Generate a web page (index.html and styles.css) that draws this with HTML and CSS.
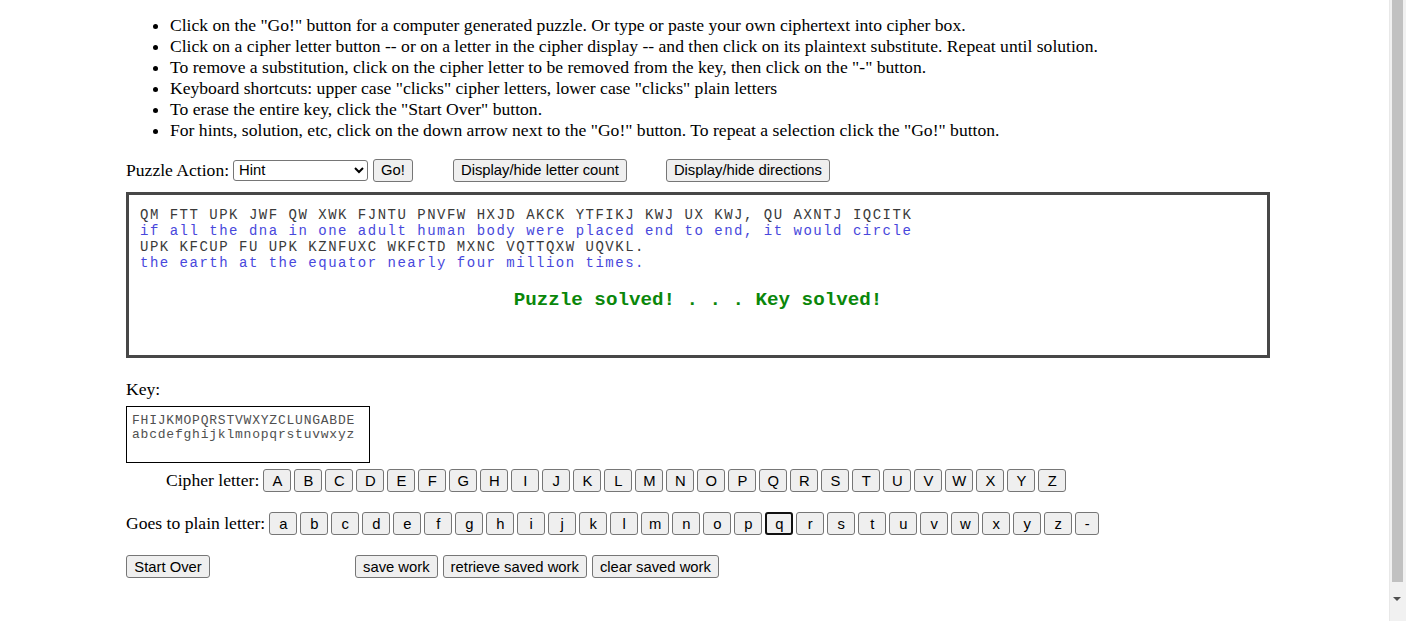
FILE: index.html
```html
<!DOCTYPE html>
<html>
<head>
<meta charset="utf-8">
<title>Cryptogram</title>
<link rel="stylesheet" href="styles.css">
</head>
<body>
<div class="page">
  <ul class="directions">
    <li>Click on the "Go!" button for a computer generated puzzle. Or type or paste your own ciphertext into cipher box.</li>
    <li>Click on a cipher letter button -- or on a letter in the cipher display -- and then click on its plaintext substitute. Repeat until solution.</li>
    <li>To remove a substitution, click on the cipher letter to be removed from the key, then click on the "-" button.</li>
    <li>Keyboard shortcuts: upper case "clicks" cipher letters, lower case "clicks" plain letters</li>
    <li>To erase the entire key, click the "Start Over" button.</li>
    <li>For hints, solution, etc, click on the down arrow next to the "Go!" button. To repeat a selection click the "Go!" button.</li>
  </ul>

  <div class="action-row">
    <span class="label">Puzzle Action:</span>
    <select class="action-select"><option>Hint</option><option>Solution</option></select>
    <button class="btn go">Go!</button>
    <button class="btn count">Display/hide letter count</button>
    <button class="btn dirs">Display/hide directions</button>
  </div>

  <div class="cipher-box">
    <div class="cline">QM FTT UPK JWF QW XWK FJNTU PNVFW HXJD AKCK YTFIKJ KWJ UX KWJ, QU AXNTJ IQCITK</div>
    <div class="pline">if all the dna in one adult human body were placed end to end, it would circle</div>
    <div class="cline">UPK KFCUP FU UPK KZNFUXC WKFCTD MXNC VQTTQXW UQVKL.</div>
    <div class="pline">the earth at the equator nearly four million times.</div>
    <div class="solved">Puzzle solved! . . . Key solved!</div>
  </div>

  <div class="key-label">Key:</div>
  <div class="key-box">
    <div>FHIJKMOPQRSTVWXYZCLUNGABDE</div>
    <div>abcdefghijklmnopqrstuvwxyz</div>
  </div>

  <div class="letter-row cipher-row">
    <span class="label">Cipher letter:</span>
    <div class="letters">
      <button class="btn L">A</button><button class="btn L">B</button><button class="btn L">C</button><button class="btn L">D</button><button class="btn L">E</button><button class="btn L">F</button><button class="btn L">G</button><button class="btn L">H</button><button class="btn L">I</button><button class="btn L">J</button><button class="btn L">K</button><button class="btn L">L</button><button class="btn L">M</button><button class="btn L">N</button><button class="btn L">O</button><button class="btn L">P</button><button class="btn L">Q</button><button class="btn L">R</button><button class="btn L">S</button><button class="btn L">T</button><button class="btn L">U</button><button class="btn L">V</button><button class="btn L">W</button><button class="btn L">X</button><button class="btn L">Y</button><button class="btn L">Z</button>
    </div>
  </div>

  <div class="letter-row plain-row">
    <span class="label">Goes to plain letter:</span>
    <div class="letters">
      <button class="btn L">a</button><button class="btn L">b</button><button class="btn L">c</button><button class="btn L">d</button><button class="btn L">e</button><button class="btn L">f</button><button class="btn L">g</button><button class="btn L">h</button><button class="btn L">i</button><button class="btn L">j</button><button class="btn L">k</button><button class="btn L">l</button><button class="btn L">m</button><button class="btn L">n</button><button class="btn L">o</button><button class="btn L">p</button><button class="btn L focused">q</button><button class="btn L">r</button><button class="btn L">s</button><button class="btn L">t</button><button class="btn L">u</button><button class="btn L">v</button><button class="btn L">w</button><button class="btn L">x</button><button class="btn L">y</button><button class="btn L">z</button><button class="btn L dash">-</button>
    </div>
  </div>

  <div class="bottom-row">
    <button class="btn start">Start Over</button>
    <div class="save-group">
      <button class="btn">save work</button>
      <button class="btn">retrieve saved work</button>
      <button class="btn">clear saved work</button>
    </div>
  </div>
</div>

<div class="scrollbar">
  <div class="thumb"></div>
  <div class="arrow"></div>
</div>
</body>
</html>
```

FILE: styles.css
```css
html, body {
  margin: 0;
  padding: 0;
  background: #ffffff;
  overflow: hidden;
}

body {
  font-family: "Liberation Serif", "Times New Roman", serif;
  font-size: 17.6px;
  color: #000;
}

.page {
  padding-left: 126px;
  width: 1144px;
}

.directions {
  margin: 15px 0 0 0;
  padding-left: 44px;
  line-height: 21px;
  list-style: disc;
}

.btn {
  font-family: "Liberation Sans", Arial, sans-serif;
  font-size: 14.8px;
  color: #000;
  background: #efefef;
  border: 1px solid #767676;
  border-radius: 3px;
  height: 23px;
  padding: 0 7px;
  margin: 0;
  line-height: 20px;
  box-sizing: border-box;
}

.action-row {
  display: flex;
  align-items: center;
  margin-top: 17px;
  height: 24px;
}

.action-row .label {
  margin-right: 4px;
}

.action-select {
  width: 135px;
  height: 21px;
  font-family: "Liberation Sans", Arial, sans-serif;
  font-size: 14.8px;
  border: 1px solid #767676;
  border-radius: 3px;
  background: #fff;
  color: #000;
  padding: 0 0 0 1px;
  margin: 0;
}

.go {
  margin-left: 5px;
}

.count {
  margin-left: 40px;
}

.dirs {
  margin-left: 39px;
}

.cipher-box {
  margin-top: 10px;
  height: 166px;
  box-sizing: border-box;
  border: 3px solid #474747;
  padding: 12px 0 0 11px;
  font-family: "Liberation Mono", "Courier New", monospace;
  font-size: 14px;
  letter-spacing: 1.5px;
  line-height: 16px;
}

.cline,
.pline {
  white-space: pre;
  height: 16px;
}

.cline {
  color: #3a3a3a;
}

.pline {
  color: #4848dc;
}

.solved {
  margin-top: 18px;
  margin-left: -11px;
  text-align: center;
  font-weight: bold;
  font-size: 19.2px;
  letter-spacing: 0;
  line-height: 22px;
  color: #0a870a;
}

.key-label {
  margin-top: 21px;
  line-height: 21px;
}

.key-box {
  margin-top: 6px;
  width: 244px;
  height: 57px;
  box-sizing: border-box;
  border: 1px solid #000;
  padding: 7px 0 0 5px;
  font-family: "Liberation Mono", "Courier New", monospace;
  font-size: 13px;
  letter-spacing: 0.78px;
  line-height: 14px;
  color: #505050;
}

.letter-row {
  display: flex;
  align-items: center;
  height: 23px;
}

.cipher-row {
  margin-top: 6px;
}

.cipher-row .label {
  margin-left: 40px;
  margin-right: 4px;
}

.plain-row {
  margin-top: 20px;
}

.plain-row .label {
  margin-right: 4px;
}

.letters {
  display: flex;
  gap: 3px;
}

.btn.L {
  width: 28px;
  padding: 0;
  text-align: center;
}

.btn.dash {
  width: 24px;
}

.btn.focused {
  border: 2px solid #111;
  border-radius: 3px;
}

.bottom-row {
  display: flex;
  align-items: center;
  margin-top: 20px;
}

.start {
  width: 84px;
}

.save-group {
  display: flex;
  gap: 5px;
  margin-left: 145px;
}

.scrollbar {
  position: fixed;
  top: 0;
  right: 0;
  width: 17px;
  height: 621px;
  background: #f1f1f1;
  border-left: 1px solid #e8e8e8;
  box-sizing: border-box;
}

.thumb {
  margin: 0 0 0 2px;
  width: 11px;
  height: 582px;
  background: #c1c1c1;
}

.arrow {
  margin: 15px 0 0 3px;
  width: 0;
  height: 0;
  border-left: 4px solid transparent;
  border-right: 4px solid transparent;
  border-top: 4px solid #505050;
}
```
